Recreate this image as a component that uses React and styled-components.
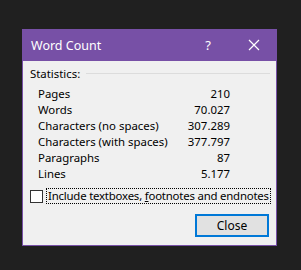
import styled, { createGlobalStyle } from "styled-components";

const GlobalStyle = createGlobalStyle`
  html, body {
    margin: 0;
    padding: 0;
    background: #202020;
  }
  body {
    width: 301px;
    height: 270px;
    overflow: hidden;
    font-family: "Noto Sans", "Open Sans", sans-serif;
  }
`;

const Page = styled.div`
  width: 301px;
  height: 270px;
  padding: 29px 0 0 22px;
  box-sizing: border-box;
`;

const Dialog = styled.div`
  width: 255px;
  background: #f0f0f0;
  border: 1px solid #7750a6;
  border-top: none;
  box-sizing: border-box;
`;

const TitleBar = styled.div`
  height: 32px;
  margin: 0 -1px;
  background: #7750a6;
  display: flex;
  align-items: center;
  color: #ffffff;
  padding-left: 9px;
`;

const Title = styled.div`
  flex: 1;
  font-size: 12.5px;
`;

const TitleButton = styled.div`
  width: 46px;
  height: 32px;
  display: flex;
  align-items: center;
  justify-content: center;
  font-size: 13px;
`;

const Body = styled.div`
  padding: 4px 6px 8px 7px;
  font-size: 11.4px;
  color: #000;
`;

const GroupHeader = styled.div`
  display: flex;
  align-items: center;
  gap: 6px;
  height: 16px;
`;

const GroupLine = styled.div`
  flex: 1;
  height: 1px;
  background: #dcdcdc;
`;

const StatsTable = styled.div`
  display: grid;
  grid-template-columns: 1fr auto;
  width: 192px;
  padding: 5px 0 0 8px;
`;

const Cell = styled.div`
  height: 16px;
  line-height: 16px;
  white-space: nowrap;
  text-align: ${(p) => (p.$right ? "right" : "left")};
`;

const CheckRow = styled.label`
  display: flex;
  align-items: center;
  gap: 3px;
  margin-top: 6px;
`;

const CheckBox = styled.div`
  flex-shrink: 0;
  width: 11px;
  height: 11px;
  border: 1px solid #333;
  background: #fff;
`;

const CheckText = styled.span`
  border: 1px dotted #000;
  padding: 0 1px;
  height: 14px;
  line-height: 14px;
  white-space: nowrap;
  letter-spacing: -0.2px;
`;

const Footer = styled.div`
  display: flex;
  justify-content: flex-end;
  padding: 10px 1px 0 0;
`;

const Button = styled.button`
  width: 74px;
  height: 23px;
  background: #e1e1e1;
  border: 2px solid #0078d7;
  font-family: inherit;
  font-size: 12px;
  color: #000;
  padding: 0;
`;

const stats = [
  ["Pages", "210"],
  ["Words", "70.027"],
  ["Characters (no spaces)", "307.289"],
  ["Characters (with spaces)", "377.797"],
  ["Paragraphs", "87"],
  ["Lines", "5.177"],
];

function CloseIcon() {
  return (
    <svg width="12" height="12" viewBox="0 0 12 12">
      <path d="M1 1 L11 11 M11 1 L1 11" stroke="#fff" strokeWidth="1.2" />
    </svg>
  );
}

export default function App() {
  return (
    <Page>
      <GlobalStyle />
      <Dialog>
        <TitleBar>
          <Title>Word Count</Title>
          <TitleButton>?</TitleButton>
          <TitleButton>
            <CloseIcon />
          </TitleButton>
        </TitleBar>
        <Body>
          <GroupHeader>
            Statistics:
            <GroupLine />
          </GroupHeader>
          <StatsTable>
            {stats.flatMap(([label, value]) => [
              <Cell key={label}>{label}</Cell>,
              <Cell key={label + "v"} $right>
                {value}
              </Cell>,
            ])}
          </StatsTable>
          <CheckRow>
            <CheckBox />
            <CheckText>
              Include textboxes, <u>f</u>ootnotes and endnotes
            </CheckText>
          </CheckRow>
          <Footer>
            <Button>Close</Button>
          </Footer>
        </Body>
      </Dialog>
    </Page>
  );
}
